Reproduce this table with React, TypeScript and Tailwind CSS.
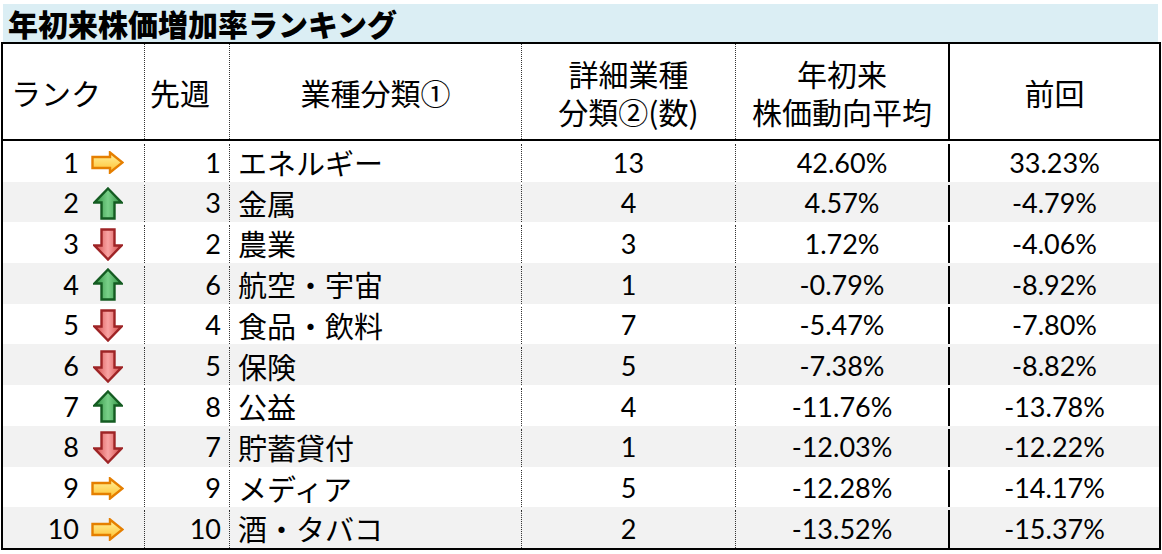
type Trend = 'same' | 'up' | 'down';

const rows: { rank: number; trend: Trend; prev: number; name: string; count: number; avg: string; last: string }[] = [
  { rank: 1, trend: 'same', prev: 1, name: 'エネルギー', count: 13, avg: '42.60%', last: '33.23%' },
  { rank: 2, trend: 'up', prev: 3, name: '金属', count: 4, avg: '4.57%', last: '-4.79%' },
  { rank: 3, trend: 'down', prev: 2, name: '農業', count: 3, avg: '1.72%', last: '-4.06%' },
  { rank: 4, trend: 'up', prev: 6, name: '航空・宇宙', count: 1, avg: '-0.79%', last: '-8.92%' },
  { rank: 5, trend: 'down', prev: 4, name: '食品・飲料', count: 7, avg: '-5.47%', last: '-7.80%' },
  { rank: 6, trend: 'down', prev: 5, name: '保険', count: 5, avg: '-7.38%', last: '-8.82%' },
  { rank: 7, trend: 'up', prev: 8, name: '公益', count: 4, avg: '-11.76%', last: '-13.78%' },
  { rank: 8, trend: 'down', prev: 7, name: '貯蓄貸付', count: 1, avg: '-12.03%', last: '-12.22%' },
  { rank: 9, trend: 'same', prev: 9, name: 'メディア', count: 5, avg: '-12.28%', last: '-14.17%' },
  { rank: 10, trend: 'same', prev: 10, name: '酒・タバコ', count: 2, avg: '-13.52%', last: '-15.37%' },
];

function TrendIcon({ trend }: { trend: Trend }) {
  if (trend === 'same') {
    return (
      <svg width="33" height="23" viewBox="0 0 33 23">
        <defs>
          <linearGradient id="gy" x1="0" y1="0" x2="0" y2="1">
            <stop offset="0" stopColor="#fff3a0" />
            <stop offset="1" stopColor="#ffc02e" />
          </linearGradient>
        </defs>
        <path d="M1.5 6H19V1.5L31.5 11.5L19 21.5V17H1.5Z" fill="url(#gy)" stroke="#e57f00" strokeWidth="2.4" />
      </svg>
    );
  }
  if (trend === 'up') {
    return (
      <svg width="30" height="33" viewBox="0 0 30 33">
        <defs>
          <linearGradient id="gg" x1="0" y1="0" x2="1" y2="0">
            <stop offset="0" stopColor="#2f8f40" />
            <stop offset="0.5" stopColor="#78d088" />
            <stop offset="1" stopColor="#2f8f40" />
          </linearGradient>
        </defs>
        <path d="M15 1.5L28.5 15.5H21.5V31.5H8.5V15.5H1.5Z" fill="url(#gg)" stroke="#145c22" strokeWidth="2.4" />
      </svg>
    );
  }
  return (
    <svg width="30" height="33" viewBox="0 0 30 33">
      <defs>
        <linearGradient id="gr" x1="0" y1="0" x2="1" y2="0">
          <stop offset="0" stopColor="#d24a48" />
          <stop offset="0.5" stopColor="#f9a3a3" />
          <stop offset="1" stopColor="#d24a48" />
        </linearGradient>
      </defs>
      <path d="M8.5 1.5H21.5V17.5H28.5L15 31.5L1.5 17.5H8.5Z" fill="url(#gr)" stroke="#9e2426" strokeWidth="2.4" />
    </svg>
  );
}

const dotted = 'border-l border-dotted border-[#333]';

export default function App() {
  return (
    <div
      className="w-[1162px] h-[554px] bg-white text-black overflow-hidden"
      style={{ fontFamily: 'Lato, "Noto Sans CJK JP", sans-serif' }}
    >
      <div className="ml-[3px] mt-[4px] w-[1155px] h-[38px] bg-[#dbeef4] pl-[5px] flex items-end">
        <span
          className="text-[30px] font-black leading-[37px]"
          style={{ fontFamily: '"Noto Sans CJK JP", sans-serif' }}
        >
          年初来株価増加率ランキング
        </span>
      </div>

      <div className="ml-[1px] w-[1160px] border-2 border-black">
        {/* header */}
        <div
          className="flex h-[97px] border-b-2 border-black text-[30px] leading-[38px]"
          style={{ fontFamily: '"Noto Sans CJK JP", sans-serif' }}
        >
          <div className="w-[141px] flex items-center pl-[8px]">ランク</div>
          <div className={`w-[85px] flex items-center pl-[5px] ${dotted}`}>先週</div>
          <div className={`w-[292px] flex items-center justify-center ${dotted}`}>業種分類①</div>
          <div className={`w-[214px] flex flex-col items-center justify-center ${dotted}`}>
            <div className="h-[38px]">詳細業種</div>
            <div className="h-[38px]">分類②(数)</div>
          </div>
          <div className={`w-[213px] flex flex-col items-center justify-center ${dotted}`}>
            <div className="h-[38px]">年初来</div>
            <div className="h-[38px]">株価動向平均</div>
          </div>
          <div className="flex-1 flex items-center justify-center border-l-2 border-black">前回</div>
        </div>

        {/* rows */}
        {rows.map((r, i) => (
          <div
            key={r.rank}
            className={`flex h-[40.7px] pt-[3px] text-[27px] ${i % 2 === 1 ? 'bg-[#f2f2f2]' : 'bg-white'}`}
          >
            <div className="w-[141px] flex items-center">
              <span className="w-[76px] text-right">{r.rank}</span>
              <span className="w-[33px] ml-[12px] flex items-center justify-center">
                <TrendIcon trend={r.trend} />
              </span>
            </div>
            <div className={`w-[85px] flex items-center justify-end pr-[8px] ${dotted}`}>{r.prev}</div>
            <div
              className={`w-[292px] flex items-center pl-[8px] text-[29px] ${dotted}`}
              style={{ fontFamily: '"Noto Sans CJK JP", sans-serif' }}
            >
              {r.name}
            </div>
            <div className={`w-[214px] flex items-center justify-center ${dotted}`}>{r.count}</div>
            <div className={`w-[213px] flex items-center justify-center ${dotted}`}>{r.avg}</div>
            <div className="flex-1 flex items-center justify-center border-l-2 border-black">{r.last}</div>
          </div>
        ))}
      </div>
    </div>
  );
}
